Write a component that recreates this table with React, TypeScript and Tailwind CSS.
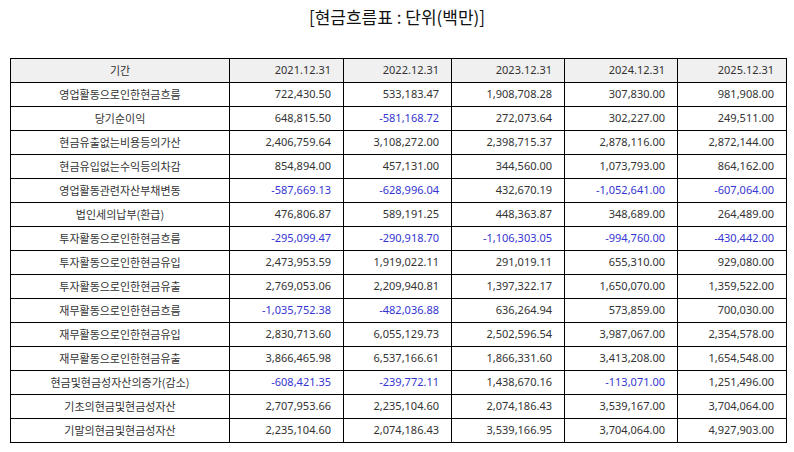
const rows: [string, string[]][] = [
  ["영업활동으로인한현금흐름", ["722,430.50", "533,183.47", "1,908,708.28", "307,830.00", "981,908.00"]],
  ["당기순이익", ["648,815.50", "-581,168.72", "272,073.64", "302,227.00", "249,511.00"]],
  ["현금유출없는비용등의가산", ["2,406,759.64", "3,108,272.00", "2,398,715.37", "2,878,116.00", "2,872,144.00"]],
  ["현금유입없는수익등의차감", ["854,894.00", "457,131.00", "344,560.00", "1,073,793.00", "864,162.00"]],
  ["영업활동관련자산부채변동", ["-587,669.13", "-628,996.04", "432,670.19", "-1,052,641.00", "-607,064.00"]],
  ["법인세의납부(환급)", ["476,806.87", "589,191.25", "448,363.87", "348,689.00", "264,489.00"]],
  ["투자활동으로인한현금흐름", ["-295,099.47", "-290,918.70", "-1,106,303.05", "-994,760.00", "-430,442.00"]],
  ["투자활동으로인한현금유입", ["2,473,953.59", "1,919,022.11", "291,019.11", "655,310.00", "929,080.00"]],
  ["투자활동으로인한현금유출", ["2,769,053.06", "2,209,940.81", "1,397,322.17", "1,650,070.00", "1,359,522.00"]],
  ["재무활동으로인한현금흐름", ["-1,035,752.38", "-482,036.88", "636,264.94", "573,859.00", "700,030.00"]],
  ["재무활동으로인한현금유입", ["2,830,713.60", "6,055,129.73", "2,502,596.54", "3,987,067.00", "2,354,578.00"]],
  ["재무활동으로인한현금유출", ["3,866,465.98", "6,537,166.61", "1,866,331.60", "3,413,208.00", "1,654,548.00"]],
  ["현금및현금성자산의증가(감소)", ["-608,421.35", "-239,772.11", "1,438,670.16", "-113,071.00", "1,251,496.00"]],
  ["기초의현금및현금성자산", ["2,707,953.66", "2,235,104.60", "2,074,186.43", "3,539,167.00", "3,704,064.00"]],
  ["기말의현금및현금성자산", ["2,235,104.60", "2,074,186.43", "3,539,166.95", "3,704,064.00", "4,927,903.00"]],
];

const years = ["2021.12.31", "2022.12.31", "2023.12.31", "2024.12.31", "2025.12.31"];

export default function App() {
  return (
    <div className="w-[794px] h-[452px] bg-white text-[#333] font-['Noto_Sans','Noto_Sans_CJK_KR',sans-serif]">
      <div className="h-[58px] pt-[3px] text-center text-[17px] leading-[28px] text-[#111] font-['Noto_Sans_CJK_KR',sans-serif]">
        [현금흐름표 : 단위(백만)]
      </div>
      <table className="ml-[10px] w-[776px] table-fixed border-collapse text-[11px]">
        <colgroup>
          <col className="w-[219px]" />
          <col className="w-[114px]" />
          <col className="w-[108px]" />
          <col className="w-[113px]" />
          <col className="w-[113px]" />
          <col className="w-[109px]" />
        </colgroup>
        <thead>
          <tr className="h-[24px] bg-[#f0f0f0]">
            <th className="border border-black font-normal text-center font-['Noto_Sans_CJK_KR',sans-serif]">기간</th>
            {years.map((y) => (
              <th key={y} className="border border-black font-normal text-right pr-[12px]">
                {y}
              </th>
            ))}
          </tr>
        </thead>
        <tbody>
          {rows.map(([label, vals]) => (
            <tr key={label} className="h-[24px]">
              <td className="border border-black text-center p-0 font-['Noto_Sans_CJK_KR',sans-serif]">{label}</td>
              {vals.map((v, i) => (
                <td
                  key={i}
                  className={
                    v.startsWith("-")
                      ? "border border-black text-right pr-[12px] p-0 text-[#3535d2]"
                      : "border border-black text-right pr-[12px] p-0"
                  }
                >
                  {v}
                </td>
              ))}
            </tr>
          ))}
        </tbody>
      </table>
    </div>
  );
}
